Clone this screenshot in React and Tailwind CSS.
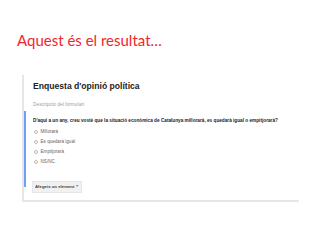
export default function App() {
  const options = ['Millorarà', 'Es quedarà igual', 'Empitjorarà', 'NS/NC']

  return (
    <div className="w-[320px] h-[240px] bg-white overflow-hidden" style={{ fontFamily: 'Arial, "Liberation Sans", sans-serif' }}>
      <div className="pt-[30px] pl-[17px] h-[75px]">
        <h1 className="text-[15px] leading-[20px] text-[#f0262d]" style={{ fontFamily: 'Lato, "Open Sans", sans-serif' }}>
          Aquest és el resultat…
        </h1>
      </div>
      <div className="ml-[22px] w-[277px] h-[127px] border-l-2 border-b-2 border-[#e6e6e6] bg-white pl-[9px]">
        <div className="pt-[5px] text-[8.6px] leading-[12px] font-semibold text-[#222]">Enquesta d'opinió política</div>
        <div className="mt-[9px] text-[4.9px] leading-[8px] text-[#a0a0a0]">Descripció del formulari</div>
        <div className="relative mt-[8px]">
          <div className="absolute left-[-9px] top-[-6px] w-[1.5px] h-[76px] bg-[#6e9ef5]" />
          <div className="text-[4.7px] leading-[8px] font-bold text-[#222] whitespace-nowrap">
            D'aquí a un any, creu vostè que la situació econòmica de Catalunya millorarà, es quedarà igual o empitjorarà?
          </div>
          <div className="mt-[2px] flex flex-col">
            {options.map(o => (
              <div key={o} className="h-[10px] flex items-center gap-[3px] pl-[1px]">
                <span className="w-[3.5px] h-[3.5px] rounded-full border-[0.6px] border-[#bbb]" />
                <span className="text-[4.6px] text-[#666]">{o}</span>
              </div>
            ))}
          </div>
        </div>
        <div className="mt-[14px] ml-[-1px] w-[50px] h-[12px] bg-[#f1f1f1] border border-[#e6e6e6] flex items-center justify-between px-[2px]">
          <span className="text-[4.3px] font-bold text-[#444] whitespace-nowrap">Afegeix un element</span>
          <span className="text-[3.5px] text-[#777]">▼</span>
        </div>
      </div>
    </div>
  )
}
